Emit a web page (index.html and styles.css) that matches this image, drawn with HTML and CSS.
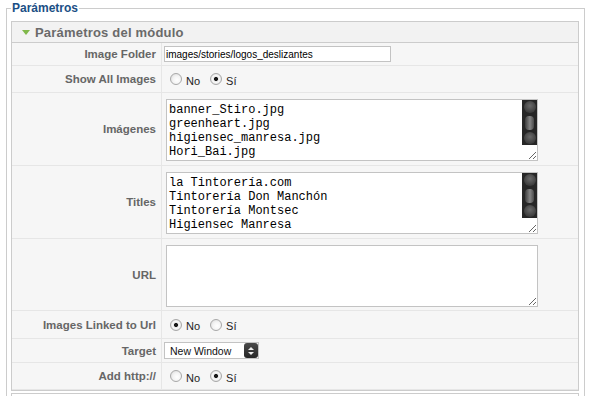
FILE: index.html
```html
<!DOCTYPE html>
<html lang="es">
<head>
    <meta charset="UTF-8" />
    <title>Parámetros del módulo</title>
    <link rel="stylesheet" href="styles.css">
</head>
<body>

<fieldset class="adminform">
    <legend>Parámetros</legend>

    <div class="panel">
        <h3 class="toggler"><span class="arrow"></span>Parámetros del módulo</h3>

        <div class="row">
            <div class="key">Image Folder</div>
            <div class="value"><input type="text" class="text" value="images/stories/logos_deslizantes" /></div>
        </div>

        <div class="row radios">
            <div class="key">Show All Images</div>
            <div class="value">
                <input type="radio" name="showall" id="showall0" />
                <label for="showall0">No</label>
                <input type="radio" name="showall" id="showall1" checked />
                <label for="showall1">Sí</label>
            </div>
        </div>

        <div class="row area">
            <div class="key">Imágenes</div>
            <div class="value">
                <div class="area-wrap">
                    <textarea spellcheck="false">banner_Stiro.jpg
greenheart.jpg
higiensec_manresa.jpg
Hori_Bai.jpg</textarea>
                    <div class="scroller"><span class="ball"></span><span class="thumb"></span><span class="ball"></span></div>
                </div>
            </div>
        </div>

        <div class="row area">
            <div class="key">Titles</div>
            <div class="value">
                <div class="area-wrap">
                    <textarea spellcheck="false">la Tintorería.com
Tintorería Don Manchón
Tintorería Montsec
Higiensec Manresa</textarea>
                    <div class="scroller"><span class="ball"></span><span class="thumb"></span><span class="ball"></span></div>
                </div>
            </div>
        </div>

        <div class="row area url">
            <div class="key">URL</div>
            <div class="value">
                <div class="area-wrap">
                    <textarea spellcheck="false"></textarea>
                </div>
            </div>
        </div>

        <div class="row radios linked">
            <div class="key">Images Linked to Url</div>
            <div class="value">
                <input type="radio" name="linked" id="linked0" checked />
                <label for="linked0">No</label>
                <input type="radio" name="linked" id="linked1" />
                <label for="linked1">Sí</label>
            </div>
        </div>

        <div class="row target">
            <div class="key">Target</div>
            <div class="value">
                <div class="select-wrap">
                    <select>
                        <option>New Window</option>
                        <option>Parent Window</option>
                    </select>
                    <span class="select-arrow"><span class="up"></span><span class="down"></span></span>
                </div>
            </div>
        </div>

        <div class="row radios">
            <div class="key">Add http://</div>
            <div class="value">
                <input type="radio" name="http" id="http0" />
                <label for="http0">No</label>
                <input type="radio" name="http" id="http1" checked />
                <label for="http1">Sí</label>
            </div>
        </div>
    </div>

    <div class="panel next"></div>
</fieldset>

</body>
</html>
```

FILE: styles.css
```css
body {
    margin: 0;
    background: #fff;
    color: #333;
    font-family: "Liberation Sans", Arial, sans-serif;
    font-size: 11px;
}
fieldset.adminform {
    margin: 0 8px 0 6px;
    padding: 5px 5px 0 4px;
    border: 1px solid #ccc;
}
legend {
    padding: 0 1px;
    font-size: 12px;
    font-weight: bold;
    line-height: 16px;
    color: #1b4f85;
}
.panel {
    border: 1px solid #ccc;
    background: #f6f6f6;
}
.panel.next {
    margin-top: 2px;
    height: 20px;
    background: #fff;
}
.toggler {
    display: flex;
    align-items: center;
    gap: 5px;
    margin: 0;
    height: 20px;
    padding-left: 10px;
    background: #f2f2f2;
    border-bottom: 1px solid #ccc;
    color: #6a6a6a;
    font-size: 13px;
    font-weight: bold;
    letter-spacing: 0.2px;
}
.arrow {
    width: 0;
    height: 0;
    border-left: 4px solid transparent;
    border-right: 4px solid transparent;
    border-top: 5px solid #80b84a;
}
.row {
    display: grid;
    grid-template-columns: 150px 1fr;
    height: 23px;
}
.row.radios { height: 27px; }
.row.linked { height: 28px; }
.row.area { height: 73px; }
.row.url { height: 72px; }
.row.target { height: 24px; }
.key {
    box-sizing: border-box;
    display: flex;
    align-items: center;
    justify-content: flex-end;
    padding-right: 5px;
    border-right: 1px solid #e6e6e6;
    border-bottom: 1px solid #e6e6e6;
    color: #666;
    font-size: 11.5px;
    font-weight: bold;
}
.value {
    display: flex;
    align-items: center;
    padding-left: 2px;
    border-bottom: 1px solid #e6e6e6;
}
.area .value {
    align-items: flex-start;
    padding-top: 6px;
}
input.text {
    box-sizing: border-box;
    width: 227px;
    height: 16px;
    margin: 0;
    padding: 0 1px;
    border: 1px solid #c3c3c3;
    background: #fff;
    font-family: "Liberation Sans Narrow", "Liberation Sans", Arial, sans-serif;
    font-size: 10px;
    color: #000;
}
input[type=radio] {
    appearance: none;
    width: 12px;
    height: 12px;
    margin: 0 4px 0 6px;
    border: 1px solid #a8a8a8;
    border-radius: 50%;
    background: radial-gradient(circle at 60% 60%, #fff 0, #f4f4f4 45%, #d6d6d6 100%);
}
input[type=radio] + label + input[type=radio] {
    margin-left: 10px;
}
input[type=radio]:checked {
    background: radial-gradient(circle, #1a1a1a 0, #1a1a1a 1.6px, #e8e8e8 2.4px, #f8f8f8 50%, #cfcfcf 100%);
}
.value label {
    margin-top: 3px;
    color: #222;
    font-size: 11px;
}
.area-wrap {
    position: relative;
    margin-left: 2px;
}
textarea {
    box-sizing: border-box;
    display: block;
    width: 372px;
    height: 62px;
    margin: 0;
    padding: 3px 2px;
    border: 1px solid #c3c3c3;
    background: #fff;
    color: #000;
    font-family: "Liberation Mono", "Courier New", monospace;
    font-size: 12px;
    line-height: 14px;
    overflow: hidden;
    resize: both;
}
.scroller {
    position: absolute;
    top: 1px;
    right: 1px;
    width: 15px;
    height: 45px;
    display: flex;
    flex-direction: column;
    align-items: center;
    justify-content: space-between;
    padding: 1px 0;
    box-sizing: border-box;
    background: #262626;
}
.ball {
    width: 12px;
    height: 12px;
    border-radius: 50%;
    background: radial-gradient(circle at 50% 40%, #6a6a6a, #404040 65%, #2e2e2e);
}
.thumb {
    width: 9px;
    height: 14px;
    border-radius: 4px;
    background: linear-gradient(to right, #3c3c3c, #858585 55%, #4a4a4a);
}
.select-wrap {
    position: relative;
}
select {
    appearance: none;
    box-sizing: border-box;
    display: block;
    width: 95px;
    height: 17px;
    margin: 0;
    padding: 0 0 0 5px;
    border: 1px solid #c3c3c3;
    border-radius: 0;
    background: #fff;
    color: #111;
    font-family: "Liberation Sans", Arial, sans-serif;
    font-size: 10.5px;
}
.select-arrow {
    position: absolute;
    top: 1px;
    right: 1px;
    width: 14px;
    height: 15px;
    display: flex;
    flex-direction: column;
    align-items: center;
    justify-content: center;
    gap: 2px;
    border-radius: 3px;
    background: linear-gradient(#4a4a4a, #262626);
}
.select-arrow .up {
    border-left: 3px solid transparent;
    border-right: 3px solid transparent;
    border-bottom: 3px solid #eee;
}
.select-arrow .down {
    border-left: 3px solid transparent;
    border-right: 3px solid transparent;
    border-top: 3px solid #eee;
}
```
